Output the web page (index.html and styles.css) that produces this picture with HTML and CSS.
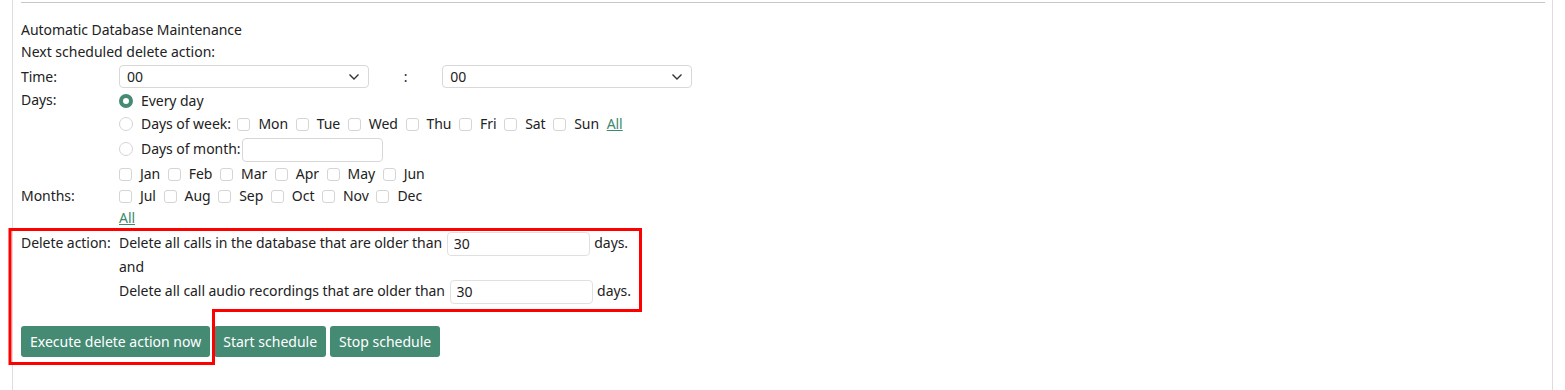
FILE: index.html
```html
<!DOCTYPE html>
<html lang="en">
<head>
    <meta charset="UTF-8">
    <title>Automatic Database Maintenance</title>
    <link rel="stylesheet" href="styles.css">
</head>
<body>
    <div class="panel">
        <hr class="top-rule">

        <div class="title">Automatic Database Maintenance</div>
        <div class="subtitle">Next scheduled delete action:</div>

        <table class="form-table">
            <tr class="time-row">
                <td class="label">Time:</td>
                <td>
                    <span class="select-wrap">
                        <select class="sel"><option>00</option></select>
                        <svg class="chev" width="12" height="8" viewBox="0 0 12 8"><path d="M1.5 1.5 L6 6 L10.5 1.5" fill="none" stroke="#333" stroke-width="1.4"/></svg>
                    </span>
                    <span class="colon">:</span>
                    <span class="select-wrap">
                        <select class="sel"><option>00</option></select>
                        <svg class="chev" width="12" height="8" viewBox="0 0 12 8"><path d="M1.5 1.5 L6 6 L10.5 1.5" fill="none" stroke="#333" stroke-width="1.4"/></svg>
                    </span>
                </td>
            </tr>
            <tr>
                <td class="label top">Days:</td>
                <td>
                    <div class="line"><input type="radio" name="days" checked><span class="txt">Every day</span></div>
                    <div class="line week-line">
                        <input type="radio" name="days"><span class="txt">Days of week:</span>
                        <input type="checkbox" class="cb"><span class="item">Mon</span>
                        <input type="checkbox" class="cb"><span class="item">Tue</span>
                        <input type="checkbox" class="cb"><span class="item">Wed</span>
                        <input type="checkbox" class="cb"><span class="item">Thu</span>
                        <input type="checkbox" class="cb"><span class="item">Fri</span>
                        <input type="checkbox" class="cb"><span class="item">Sat</span>
                        <input type="checkbox" class="cb"><span class="item">Sun</span>
                        <a href="#" class="all">All</a>
                    </div>
                    <div class="line month-line">
                        <input type="radio" name="days"><span class="txt">Days of month:</span><input type="text" class="month-days">
                    </div>
                </td>
            </tr>
            <tr>
                <td class="label">Months:</td>
                <td>
                    <div class="line">
                        <input type="checkbox" class="cb first"><span class="item">Jan</span>
                        <input type="checkbox" class="cb"><span class="item">Feb</span>
                        <input type="checkbox" class="cb"><span class="item">Mar</span>
                        <input type="checkbox" class="cb"><span class="item">Apr</span>
                        <input type="checkbox" class="cb"><span class="item">May</span>
                        <input type="checkbox" class="cb"><span class="item">Jun</span>
                    </div>
                    <div class="line">
                        <input type="checkbox" class="cb first"><span class="item">Jul</span>
                        <input type="checkbox" class="cb"><span class="item">Aug</span>
                        <input type="checkbox" class="cb"><span class="item">Sep</span>
                        <input type="checkbox" class="cb"><span class="item">Oct</span>
                        <input type="checkbox" class="cb"><span class="item">Nov</span>
                        <input type="checkbox" class="cb"><span class="item">Dec</span>
                    </div>
                    <div class="line all-line"><a href="#" class="all">All</a></div>
                </td>
            </tr>
            <tr class="delete-row">
                <td class="label top">Delete action:</td>
                <td>
                    <div class="line input-line">Delete all calls in the database that are older than <input type="text" class="days-in" value="30"> days.</div>
                    <div class="line">and</div>
                    <div class="line input-line">Delete all call audio recordings that are older than <input type="text" class="days-in" value="30"> days.</div>
                </td>
            </tr>
        </table>

        <div class="actions">
            <button class="btn">Execute delete action now</button>
            <button class="btn">Start schedule</button>
            <button class="btn">Stop schedule</button>
        </div>
    </div>

    <!-- review markup drawn over the page -->
    <svg class="markup" width="1565" height="390">
        <path d="M10 229.5 H640.5 V310.5 H213.5 V363.5 H10 Z" fill="none" stroke="#ff0000" stroke-width="3"/>
    </svg>
</body>
</html>
```

FILE: styles.css
```css
body { margin: 0; font-family: "Noto Sans", sans-serif; font-size: 14px; color: #222; background: #fff; }
.panel { margin-left: 12px; width: 1524px; height: 390px; padding: 0 7px 0 8px; border-left: 1px solid #ddd; border-right: 1px solid #ddd; }
.top-rule { margin: 0; padding-top: 2px; border: none; border-bottom: 1px solid #c8c8c8; height: 0; }
.title { margin-top: 16px; line-height: 22px; letter-spacing: -0.05px; }
.subtitle { line-height: 22px; }

.form-table { border-collapse: collapse; margin-top: 1px; letter-spacing: -0.05px; }
.form-table td { padding: 0; vertical-align: middle; }
.form-table td.label { width: 98px; white-space: nowrap; }
.form-table td.top { vertical-align: top; }
.delete-row td.top { padding-top: 5px; }
.time-row td { padding: 1px 0 2px; }

.select-wrap { position: relative; display: inline-block; vertical-align: middle; }
.sel { appearance: none; -webkit-appearance: none; width: 250px; height: 23px; padding: 0 24px 0 7px; font: inherit; font-size: 14px; color: #222; background: #fff; border: 1px solid #d8d8d8; border-radius: 4px; }
.chev { position: absolute; right: 9px; top: 8px; pointer-events: none; }
.colon { display: inline-block; width: 74px; text-align: center; vertical-align: middle; margin: 0 -4px; }

.line { line-height: 22px; white-space: nowrap; }
.week-line { line-height: 23px; }
.month-line { height: 28px; line-height: 28px; }
.all-line { line-height: 21px; }
.input-line { height: 26px; line-height: 26px; }
.delete-row .input-line:first-child { margin-top: 2px; }

input[type=radio] { appearance: none; -webkit-appearance: none; width: 14px; height: 14px; margin: 0 8px 0 0; border: 1px solid #d5d5d5; border-radius: 50%; vertical-align: -2px; background: #fff; }
input[type=radio]:checked { border: 4px solid #458a72; background: #fff; }
.cb { appearance: none; -webkit-appearance: none; width: 13px; height: 13px; margin: 0 8px 0 3px; border: 1px solid #d5d5d5; border-radius: 3px; vertical-align: -2px; background: #fff; }
.cb.first { margin-left: 0; }
.item { margin-right: 1px; }
.all { color: #3d8a6d; text-decoration: underline; margin-left: 3px; }
.line > .all:first-child { margin-left: 0; }

.month-days { width: 141px; height: 24px; box-sizing: border-box; margin-left: 2px; border: 1px solid #d8d8d8; border-radius: 4px; vertical-align: middle; font: inherit; }
.days-in { width: 143px; height: 24px; box-sizing: border-box; margin: 0 1px; padding: 0 6px; border: 1px solid #e0e0e0; border-radius: 4px; vertical-align: middle; font: inherit; font-size: 14px; color: #222; }

.actions { margin-top: 22px; display: flex; gap: 4px; }
.btn { height: 31px; padding: 0 9px; background: #458a72; color: #fff; border: none; border-radius: 3px; font: inherit; font-size: 14px; cursor: pointer; }

.markup { position: absolute; left: 0; top: 0; pointer-events: none; }
```
